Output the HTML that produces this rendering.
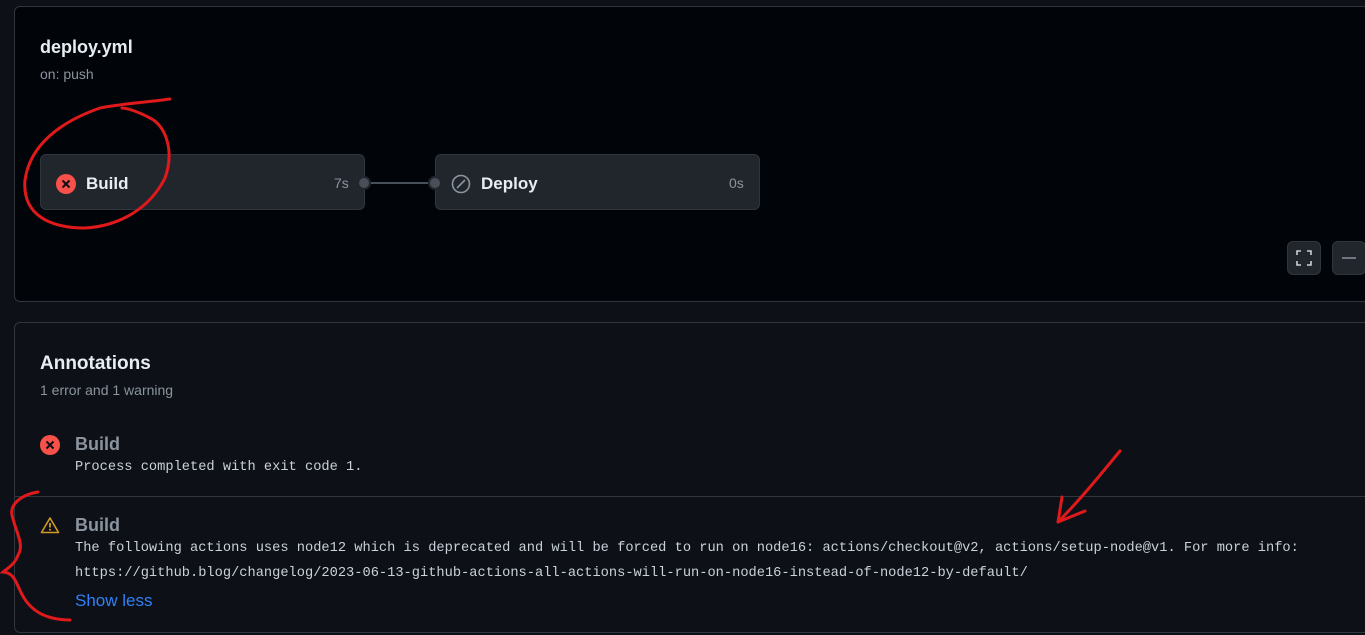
<!DOCTYPE html>
<html><head><style>
body{margin:0;width:1365px;height:635px;background:#0d1117;font-family:"Liberation Sans",sans-serif;overflow:hidden;position:relative;color:#e6edf3}
.p1{position:absolute;left:14px;top:6px;width:1360px;height:294px;background:#010409;border:1px solid #30363d;border-radius:6px}
.p2{position:absolute;left:14px;top:322px;width:1360px;height:309px;background:#0d1117;border:1px solid #30363d;border-radius:6px}
.abs{position:absolute}
.job{position:absolute;top:154px;height:56px;background:#21262d;border:1px solid #30363d;border-radius:6px;box-sizing:border-box}
.mono{font-family:"Liberation Mono",monospace;font-size:13.7px;color:#c9d1d9}
.dot{position:absolute;width:10px;height:10px;border-radius:50%;background:#484f58;border:2px solid #21262d}
.btn{position:absolute;top:241px;width:34px;height:34px;background:#21262d;border:1px solid #30363d;border-radius:6px;box-sizing:border-box}
</style></head><body>
<div class="p1"></div>
<div class="abs" style="left:40px;top:37px;font-size:18px;font-weight:bold;color:#e6edf3">deploy.yml</div>
<div class="abs" style="left:40px;top:66px;font-size:14px;color:#8b949e">on: push</div>
<div class="job" style="left:40px;width:325px"></div>
<svg class="abs" style="left:56px;top:174px" width="20" height="20"><circle cx="10" cy="10" r="10" fill="#f85149"/><path d="M6.5 6.5L13.5 13.5M13.5 6.5L6.5 13.5" stroke="#0d1117" stroke-width="2"/></svg>
<div class="abs" style="left:86px;top:174px;font-size:17px;font-weight:bold">Build</div>
<div class="abs" style="left:334px;top:175px;font-size:14px;color:#8b949e">7s</div>
<div class="abs" style="left:365px;top:182px;width:70px;height:2px;background:#484f58"></div>
<div class="dot" style="left:357px;top:176px"></div>
<div class="job" style="left:435px;width:325px"></div>
<div class="dot" style="left:428px;top:176px"></div>
<svg class="abs" style="left:451px;top:174px" width="20" height="20"><circle cx="10" cy="10" r="8.5" fill="none" stroke="#8b949e" stroke-width="1.6"/><path d="M6 14L14 6" stroke="#8b949e" stroke-width="1.6"/></svg>
<div class="abs" style="left:481px;top:174px;font-size:17px;font-weight:bold">Deploy</div>
<div class="abs" style="left:729px;top:175px;font-size:14px;color:#8b949e">0s</div>
<div class="btn" style="left:1287px"><svg width="32" height="32"><path d="M9 13V9h4M19 9h4v4M23 19v4h-4M13 23H9v-4" fill="none" stroke="#c9d1d9" stroke-width="1.6"/></svg></div>
<div class="btn" style="left:1332px"><div class="abs" style="left:9px;top:15px;width:14px;height:2px;background:#6e7681"></div></div>
<div class="p2"></div>
<div class="abs" style="left:40px;top:353px;font-size:19px;font-weight:bold">Annotations</div>
<div class="abs" style="left:40px;top:382px;font-size:14px;color:#8b949e">1 error and 1 warning</div>
<svg class="abs" style="left:40px;top:435px" width="20" height="20"><circle cx="10" cy="10" r="10" fill="#f85149"/><path d="M6.5 6.5L13.5 13.5M13.5 6.5L6.5 13.5" stroke="#0d1117" stroke-width="2"/></svg>
<div class="abs" style="left:75px;top:434px;font-size:18px;font-weight:bold;color:#8b949e">Build</div>
<div class="abs mono" style="left:75px;top:460px">Process completed with exit code 1.</div>
<div class="abs" style="left:15px;top:496px;width:1350px;height:1px;background:#30363d"></div>
<svg class="abs" style="left:40px;top:516px" width="20" height="18"><path d="M10 2L18.5 16.5H1.5Z" fill="none" stroke="#d29922" stroke-width="1.6" stroke-linejoin="round"/><path d="M10 7v4.5" stroke="#d29922" stroke-width="1.8"/><circle cx="10" cy="13.8" r="1" fill="#d29922"/></svg>
<div class="abs" style="left:75px;top:515px;font-size:18px;font-weight:bold;color:#8b949e">Build</div>
<div class="abs mono" style="left:75px;top:541px;white-space:nowrap">The following actions uses node12 which is deprecated and will be forced to run on node16: actions/checkout@v2, actions/setup-node@v1. For more info:</div>
<div class="abs mono" style="left:75px;top:566px;white-space:nowrap">https://github.blog/changelog/2023-06-13-github-actions-all-actions-will-run-on-node16-instead-of-node12-by-default/</div>
<div class="abs" style="left:75px;top:591px;font-size:17px;color:#2f81f7">Show less</div>
<svg class="abs" style="left:0;top:0" width="1365" height="635" fill="none" stroke="#e0191b" stroke-width="3" stroke-linecap="round">
<path d="M170 99C140 103 120 104 100 108C60 122 30 145 25 180C22 215 50 228 85 228C120 226 150 208 165 178C175 150 165 125 150 118C135 110 125 108 122 108"/>
<path d="M1120 451C1100 475 1080 500 1058 522M1058 522L1062 497M1058 522L1085 511"/>
<path d="M38 492C20 495 10 505 12 515C15 530 25 545 18 555C15 565 5 570 3 572C20 573 15 595 35 610C45 618 60 620 70 620"/>
</svg>
</body></html>
